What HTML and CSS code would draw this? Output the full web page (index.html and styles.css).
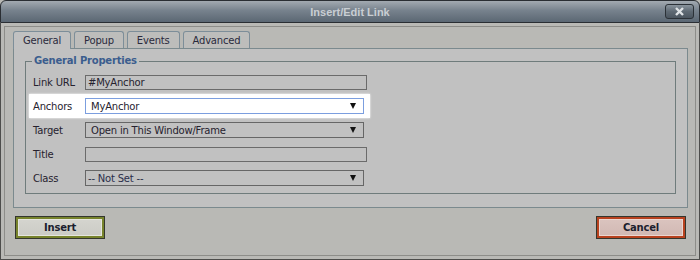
FILE: index.html
```html
<!DOCTYPE html>
<html lang="en">
  <head>
    <meta charset="UTF-8" />
    <title>Insert/Edit Link</title>
    <link rel="stylesheet" href="styles.css">
  </head>
  <body>
    <div class="dialog">
      <div class="titlebar">
        <span class="title">Insert/Edit Link</span>
        <span class="close">
          <svg width="9" height="9" viewBox="0 0 9 9">
            <path d="M1 1 L8 8 M8 1 L1 8" stroke="#dfe3e6" stroke-width="2.4" />
          </svg>
        </span>
      </div>
      <div class="body">
        <div class="tabs">
          <div class="tab active">General</div>
          <div class="tab">Popup</div>
          <div class="tab">Events</div>
          <div class="tab">Advanced</div>
        </div>
        <div class="panel">
          <fieldset>
            <legend>General Properties</legend>
            <div class="row">
              <label>Link URL</label>
              <div class="input">#MyAnchor</div>
            </div>
            <div class="row focus">
              <label>Anchors</label>
              <div class="select blue">MyAnchor <span class="arrow"></span></div>
            </div>
            <div class="row">
              <label>Target</label>
              <div class="select">Open in This Window/Frame <span class="arrow"></span></div>
            </div>
            <div class="row">
              <label>Title</label>
              <div class="input"></div>
            </div>
            <div class="row">
              <label>Class</label>
              <div class="select notset">-- Not Set -- <span class="arrow"></span></div>
            </div>
          </fieldset>
        </div>
        <div class="actions">
          <div class="btn insert">Insert</div>
          <div class="btn cancel">Cancel</div>
        </div>
      </div>
    </div>
  </body>
</html>
```

FILE: styles.css
```css
* {
  margin: 0;
  padding: 0;
  box-sizing: border-box;
}
body {
  width: 700px;
  height: 260px;
  font-family: 'DejaVu Sans', sans-serif;
  font-size: 10px;
  letter-spacing: -0.2px;
  color: #26222e;
  background: #b9b9b5;
}
.dialog {
  width: 700px;
  height: 260px;
  display: flex;
  flex-direction: column;
}
.titlebar {
  height: 23px;
  display: flex;
  align-items: center;
  justify-content: center;
  position: relative;
  border: 1px solid #2a2e33;
  border-radius: 6px 6px 0 0;
  background: linear-gradient(#a3aab1, #77828d 45%, #5b6773);
}
.title {
  font-family: 'Liberation Sans', sans-serif;
  font-size: 11px;
  font-weight: bold;
  letter-spacing: 0;
  color: #c9ced3;
}
.close {
  position: absolute;
  right: 5px;
  top: 3px;
  width: 29px;
  height: 15px;
  display: flex;
  align-items: center;
  justify-content: center;
  border: 1px solid #2b3137;
  border-radius: 3px;
  background: linear-gradient(#8a949d, #5e6973 50%, #4b555f);
}
.body {
  flex: 1;
  padding: 8px 11px 0 12px;
  border: 1px solid #4d4d4b;
  border-top: none;
  box-shadow: inset 0 0 0 3px #b9b9b5, inset 0 0 0 4px #8d8d89;
}
.tabs {
  display: flex;
  gap: 3px;
  height: 17px;
}
.tab {
  padding: 0 9px;
  height: 17px;
  line-height: 17px;
  border: 1px solid #7d8e99;
  border-bottom: none;
  border-radius: 3px 3px 0 0;
  background: #bdbdbb;
  color: #2a2a3c;
}
.tab.active {
  height: 18px;
  background: #c1c1c1;
  position: relative;
}
.panel {
  border: 1px solid #7b8a8e;
  background: #c1c1c1;
  padding: 6px 11px 13px 11px;
}
fieldset {
  border: 1px solid #6f7c7c;
  padding: 3px 0 3px 3px;
}
legend {
  margin-left: 3px;
  padding: 0 2px;
  font-weight: bold;
  color: #3b5d8e;
  line-height: 12px;
}
.row {
  width: 341px;
  height: 24px;
  padding: 0 3px 0 4px;
  display: flex;
  align-items: center;
}
.row.focus {
  background: #fff;
  box-shadow: 0 0 2px #fff;
}
.row label {
  width: 52px;
}
.input {
  flex: 1;
  height: 15px;
  line-height: 13px;
  padding-left: 2px;
  border: 1px solid #6b6b6b;
}
.select {
  flex: 1;
  height: 16px;
  margin-right: 3px;
  padding: 0 5px;
  display: flex;
  align-items: center;
  justify-content: space-between;
  border: 1px solid #666;
}
.select.blue {
  border-color: #7b9edf;
  background: #fff;
}
.select.notset {
  padding-left: 2px;
  color: #2a2e4a;
}
.arrow {
  width: 0;
  height: 0;
  margin-right: 2px;
  border-left: 3.5px solid transparent;
  border-right: 3.5px solid transparent;
  border-top: 6px solid #111;
}
.actions {
  display: flex;
  justify-content: space-between;
  padding: 8px 2px 0 2px;
}
.btn {
  width: 90px;
  height: 23px;
  line-height: 22px;
  text-align: center;
  font-weight: bold;
  color: #1c1e2e;
  border: 1px solid #34362e;
}
.insert {
  background: linear-gradient(#d6d6d0, #cacac4);
  box-shadow: inset 0 0 0 2px #77832c, inset 0 0 0 3px #e6e6de;
}
.cancel {
  background: linear-gradient(#dcc5c0, #d0b7b2);
  box-shadow: inset 0 0 0 2px #b8421f, inset 0 0 0 3px #ecd6d0;
}
```
